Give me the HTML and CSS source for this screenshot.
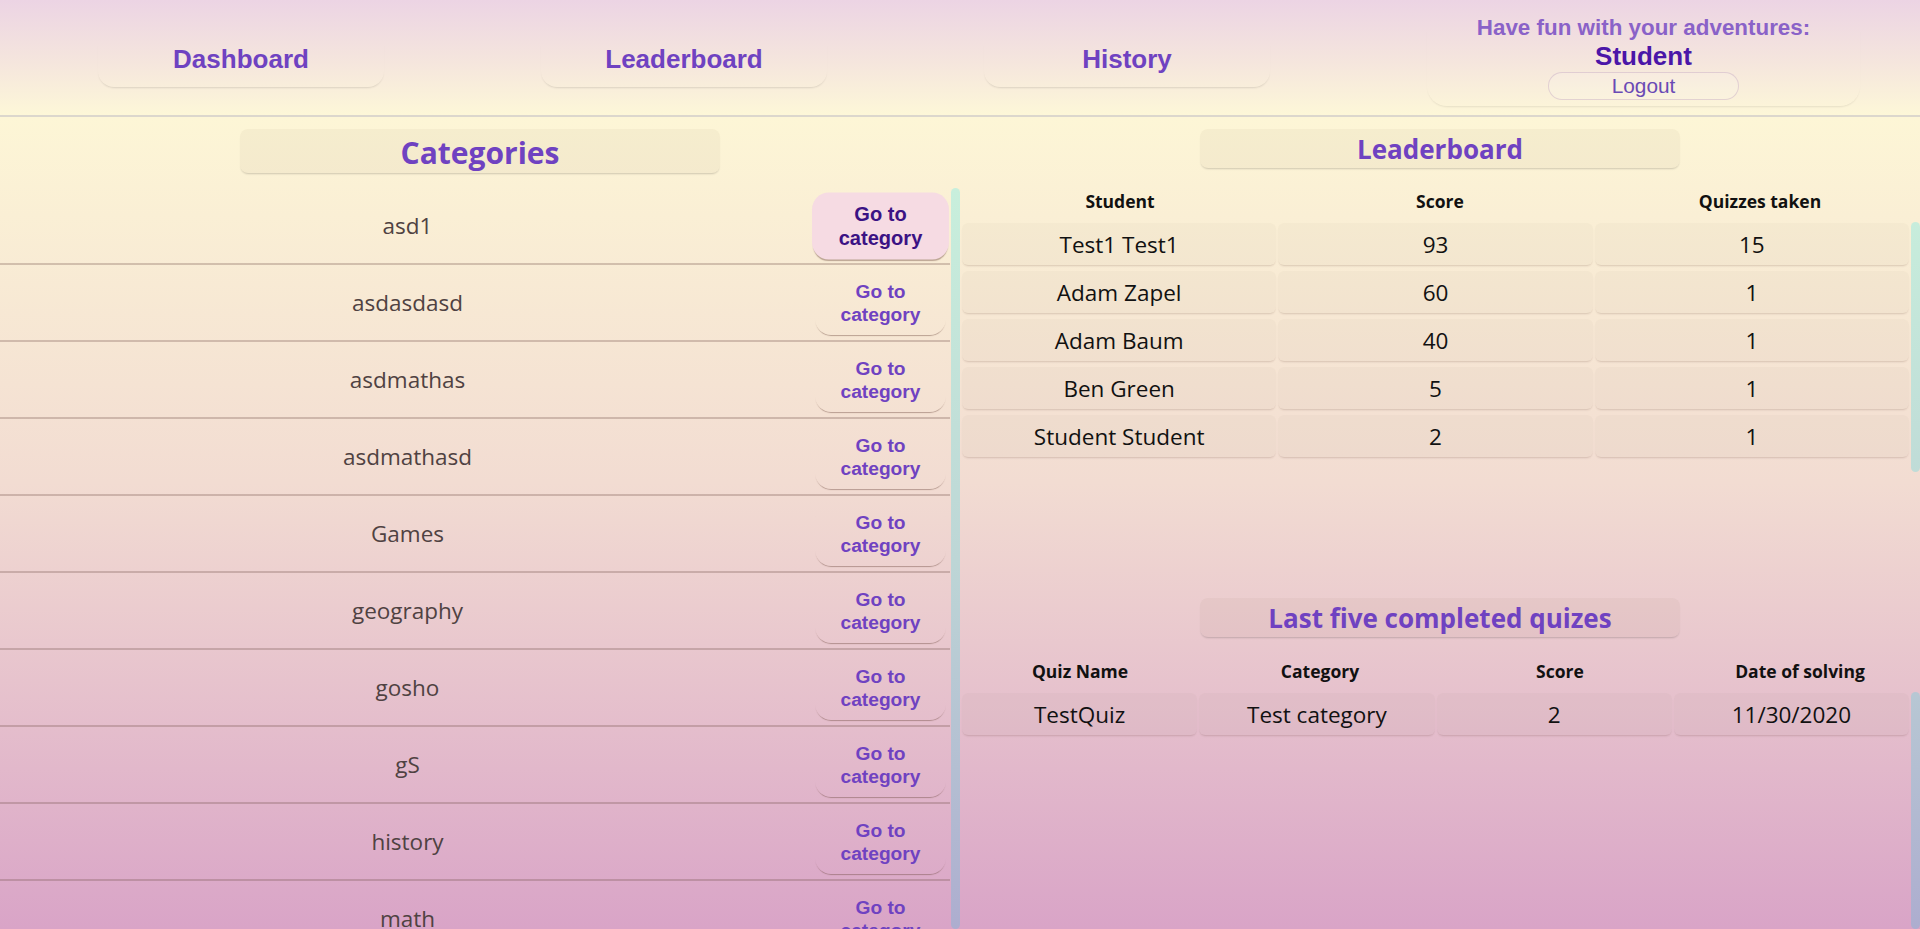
FILE: index.html
```html
<!DOCTYPE html>
<html lang="en">
<head>
<meta charset="utf-8">
<title>Quiz Dashboard</title>
<link rel="stylesheet" href="styles.css">
</head>
<body>
<header class="topbar">
  <a class="nav-btn">Dashboard</a>
  <a class="nav-btn">Leaderboard</a>
  <a class="nav-btn">History</a>
  <div class="user-box">
    <div class="greet">Have fun with your adventures:</div>
    <div class="user-name">Student</div>
    <button class="logout">Logout</button>
  </div>
</header>
<main class="content">
  <section class="col col-left">
    <h2 class="section-title title-lg">Categories</h2>
    <div class="scroll-wrap list-wrap">
      <ul class="cat-list">
        <li class="cat-row"><span class="cat-name">asd1</span><button class="go-btn is-hover">Go to category</button></li>
        <li class="cat-row"><span class="cat-name">asdasdasd</span><button class="go-btn">Go to category</button></li>
        <li class="cat-row"><span class="cat-name">asdmathas</span><button class="go-btn">Go to category</button></li>
        <li class="cat-row"><span class="cat-name">asdmathasd</span><button class="go-btn">Go to category</button></li>
        <li class="cat-row"><span class="cat-name">Games</span><button class="go-btn">Go to category</button></li>
        <li class="cat-row"><span class="cat-name">geography</span><button class="go-btn">Go to category</button></li>
        <li class="cat-row"><span class="cat-name">gosho</span><button class="go-btn">Go to category</button></li>
        <li class="cat-row"><span class="cat-name">gS</span><button class="go-btn">Go to category</button></li>
        <li class="cat-row"><span class="cat-name">history</span><button class="go-btn">Go to category</button></li>
        <li class="cat-row"><span class="cat-name">math</span><button class="go-btn">Go to category</button></li>
      </ul>
      <div class="bar"></div>
    </div>
  </section>
  <section class="col col-right">
    <h2 class="section-title">Leaderboard</h2>
    <div class="thead cols-3"><div>Student</div><div>Score</div><div>Quizzes taken</div></div>
    <div class="scroll-wrap lb-body">
      <div class="rows">
        <div class="trow cols-3"><div class="cell">Test1 Test1</div><div class="cell">93</div><div class="cell">15</div></div>
        <div class="trow cols-3"><div class="cell">Adam Zapel</div><div class="cell">60</div><div class="cell">1</div></div>
        <div class="trow cols-3"><div class="cell">Adam Baum</div><div class="cell">40</div><div class="cell">1</div></div>
        <div class="trow cols-3"><div class="cell">Ben Green</div><div class="cell">5</div><div class="cell">1</div></div>
        <div class="trow cols-3"><div class="cell">Student Student</div><div class="cell">2</div><div class="cell">1</div></div>
      </div>
      <div class="bar"></div>
    </div>
    <h2 class="section-title quiz-title">Last five completed quizes</h2>
    <div class="thead cols-4 quiz-head"><div>Quiz Name</div><div>Category</div><div>Score</div><div>Date of solving</div></div>
    <div class="scroll-wrap quiz-body">
      <div class="rows">
        <div class="trow cols-4"><div class="cell">TestQuiz</div><div class="cell">Test category</div><div class="cell">2</div><div class="cell">11/30/2020</div></div>
      </div>
      <div class="bar"></div>
    </div>
  </section>
</main>
</body>
</html>
```
FILE: styles.css
```css
html, body {
  margin: 0;
  padding: 0;
  height: 100%;
}
body {
  overflow: hidden;
  font-family: "Open Sans", "Noto Sans", sans-serif;
  color: #111;
}

/* ---------- header ---------- */
.topbar {
  height: 115px;
  border-bottom: 2px solid #dcd7cd;
  background: linear-gradient(to bottom, #ecd4e4 0%, #f5e6dd 55%, #fdf7d8 100%);
  display: flex;
  align-items: flex-start;
  gap: 157px;
  padding-left: 98px;
  box-sizing: content-box;
}
.nav-btn {
  width: 286px;
  height: 56px;
  margin-top: 31px;
  border-radius: 16px;
  box-shadow: 0 2px 2px -1px rgba(0, 0, 0, 0.12);
  font-family: "Liberation Sans", Arial, sans-serif;
  font-weight: 700;
  font-size: 26px;
  line-height: 56px;
  text-align: center;
  color: #6f42c1;
  cursor: pointer;
}
.user-box {
  width: 433px;
  margin-top: 12px;
  padding: 3px 0 6px;
  border-radius: 20px;
  box-shadow: 0 2px 2px -1px rgba(0, 0, 0, 0.09);
  display: flex;
  flex-direction: column;
  align-items: center;
  font-family: "Liberation Sans", Arial, sans-serif;
}
.greet {
  font-weight: 700;
  font-size: 22.4px;
  line-height: 26px;
  color: #8a62c8;
}
.user-name {
  font-weight: 700;
  font-size: 26px;
  line-height: 30px;
  color: #4b16a8;
}
.logout {
  margin-top: 1px;
  width: 191px;
  height: 28px;
  padding: 0;
  border: 1px solid rgba(190, 160, 190, 0.4);
  border-radius: 14px;
  background: rgba(255, 255, 255, 0.12);
  font-family: "Liberation Sans", Arial, sans-serif;
  font-size: 20.8px;
  line-height: 26px;
  color: #6a4ab5;
}

/* ---------- main ---------- */
.content {
  height: 812px;
  display: grid;
  grid-template-columns: 960px 960px;
  background: linear-gradient(to bottom, #fdf6d6 0%, #f2dcd2 45%, #d9a4c7 100%);
}
.col {
  padding-top: 12px;
  display: flex;
  flex-direction: column;
  min-height: 0;
}
.section-title {
  margin: 0 auto;
  width: 480px;
  height: 39px;
  line-height: 40px;
  border-radius: 8px;
  background: rgba(110, 90, 60, 0.05);
  box-shadow: 0 2px 2px -1px rgba(0, 0, 0, 0.18);
  text-align: center;
  font-size: 26px;
  font-weight: 700;
  color: #6f42c1;
}
.title-lg {
  height: 44px;
  line-height: 47px;
  font-size: 30px;
}

.scroll-wrap {
  display: flex;
  gap: 1px;
  min-height: 0;
}
.bar {
  width: 9px;
  flex: none;
  border-radius: 5px;
  background: linear-gradient(to bottom, #c8efdc 188px, #bdd6d6 560px, #adadcf 929px) fixed;
}

/* ---------- categories ---------- */
.list-wrap {
  margin-top: 15px;
  height: 741px;
}
.cat-list {
  width: 950px;
  margin: 0;
  padding: 0;
  list-style: none;
  overflow: hidden;
}
.cat-row {
  height: 75px;
  border-bottom: 2px solid rgba(120, 85, 80, 0.3);
  display: flex;
  align-items: center;
}
.cat-name {
  flex: 1;
  text-align: center;
  font-size: 22.5px;
  color: #4f4242;
}
.go-btn {
  width: 131px;
  height: 64px;
  margin-right: 4px;
  padding: 0 10px;
  border: none;
  border-radius: 16px;
  background: transparent;
  box-shadow: 0 2px 1px -1px rgba(110, 75, 65, 0.45);
  font-family: "Liberation Sans", Arial, sans-serif;
  font-weight: 700;
  font-size: 19.2px;
  line-height: 23px;
  color: #6f42c1;
}
.go-btn.is-hover {
  background: #f6dbe3;
  color: #3b1284;
  transform: scale(1.045);
}

/* ---------- tables ---------- */
.thead {
  margin-top: 12px;
  height: 42px;
  display: grid;
  align-items: center;
  text-align: center;
  font-size: 17.5px;
  font-weight: 700;
  color: #111;
}
.cols-3 { grid-template-columns: repeat(3, 1fr); }
.cols-4 { grid-template-columns: repeat(4, 1fr); }

.lb-body {
  height: 250px;
  gap: 2px;
  padding-left: 2px;
}
.quiz-body {
  flex: 1;
  gap: 2px;
  padding-left: 2px;
}
.rows {
  flex: 1;
  padding-top: 1px;
  display: flex;
  flex-direction: column;
  gap: 6px;
}
.trow {
  display: grid;
  gap: 2px;
}
.cell {
  height: 42px;
  display: flex;
  align-items: center;
  justify-content: center;
  border-radius: 6px;
  background: rgba(110, 80, 60, 0.03);
  box-shadow: 0 2px 2px -1px rgba(90, 55, 45, 0.2);
  font-size: 22.5px;
  color: #111;
}

.quiz-title {
  margin-top: 126px;
}
.quiz-head {
  margin-top: 13px;
}
```
